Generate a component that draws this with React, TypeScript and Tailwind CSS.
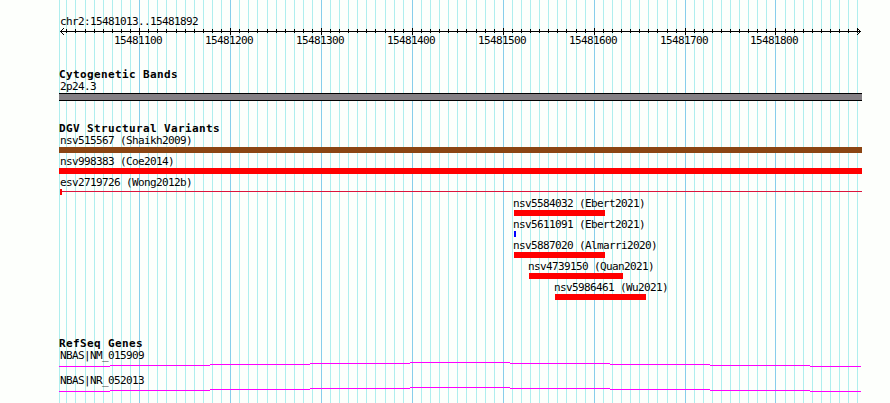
const START = 1013;
const OFFSET = 15480000;

interface Feature {
  name: string;
  x: number;
  width: number;
  color: string;
}

const wideVariants: Feature[] = [
  { name: "nsv515567 (Shaikh2009)", x: 59, width: 803, color: "bg-[#8b4513]" },
  { name: "nsv998383 (Coe2014)", x: 59, width: 803, color: "bg-[#ff0000]" },
];

const variants: Feature[] = [
  { name: "nsv5584032 (Ebert2021)", x: 514, width: 91, color: "bg-[#ff0000]" },
  { name: "nsv5611091 (Ebert2021)", x: 514, width: 2, color: "bg-[#0000ff]" },
  { name: "nsv5887020 (Almarri2020)", x: 514, width: 91, color: "bg-[#ff0000]" },
  { name: "nsv4739150 (Quan2021)", x: 529, width: 94, color: "bg-[#ff0000]" },
  { name: "nsv5986461 (Wu2021)", x: 555, width: 91, color: "bg-[#ff0000]" },
];

// x of every hundredth base, and the minor step that takes the extra pixel
const majors = [
  { x: 48, wide: 4 },
  { x: 139, wide: 4 },
  { x: 230, wide: 4 },
  { x: 321, wide: 7 },
  { x: 412, wide: 7 },
  { x: 503, wide: 8 },
  { x: 594, wide: 8 },
  { x: 685, wide: 99 },
  { x: 775, wide: 1 },
];

const ticks = majors.flatMap(({ x, wide }, m) =>
  Array.from({ length: 10 }, (_, i) => ({
    x: x + i * 9 + (i >= wide ? 1 : 0),
    major: i === 0,
    base: OFFSET + 1000 + m * 100 + i * 10,
  })),
).filter((t) => t.base > OFFSET + START && t.x < 860);

const intron = [
  [59, 110, 4],
  [110, 210, 3],
  [210, 310, 2],
  [310, 410, 1],
  [410, 510, 0],
  [510, 610, 1],
  [610, 710, 2],
  [710, 810, 3],
  [810, 861, 4],
];

function Grid() {
  return (
    <div className="pointer-events-none absolute inset-0" aria-hidden="true">
      <div className="absolute inset-y-0 left-[59px] w-px bg-[#afeeee]" />
      {ticks.map((t) => (
        <div
          key={t.base}
          className={t.major ? "absolute inset-y-0 w-px bg-[#87ceeb]" : "absolute inset-y-0 w-px bg-[#afeeee]"}
          style={{ left: t.x }}
        />
      ))}
    </div>
  );
}

function Ruler() {
  return (
    <svg width="890" height="20" className="block" shapeRendering="crispEdges">
      <rect x="60" y="3" width="801" height="1" />
      <path d="M61 2h1v1h-1z M62 1h1v1h-1z M63 0h1v1h-1z M61 4h1v1h-1z M62 5h1v1h-1z M63 6h1v1h-1z" />
      <path d="M859 2h1v1h-1z M858 1h1v1h-1z M857 0h1v1h-1z M859 4h1v1h-1z M858 5h1v1h-1z M857 6h1v1h-1z" />
      {ticks.map((t) => (
        <rect key={t.base} x={t.x} y={t.major ? 0 : 1} width="1" height={t.major ? 7 : 4} />
      ))}
      {ticks.filter((t) => t.major).map((t) => (
        <text key={t.base} x={t.x - 25} y="16">{t.base}</text>
      ))}
    </svg>
  );
}

function Heading({ children }: { children: string }) {
  return <h2 className="h-3 pl-[59px] font-bold tracking-[0.38px]">{children}</h2>;
}

function VariantRow({ feature }: { feature: Feature }) {
  return (
    <div className="h-[21px]" style={{ paddingLeft: feature.x }}>
      <div className={feature.x === 59 ? "h-3 pl-px" : "-ml-px h-3"}>{feature.name}</div>
      <div className={`h-1.5 ${feature.color}`} style={{ width: feature.width }} />
    </div>
  );
}

function Gene({ name }: { name: string }) {
  return (
    <div className="h-[25px]">
      <div className="h-3 pl-[60px]">{name}</div>
      <svg width="890" height="5" className="block" shapeRendering="crispEdges">
        {intron.map(([from, to, y]) => (
          <rect key={from} x={from} y={y} width={to - from} height="1" fill="#ff00ff" />
        ))}
      </svg>
    </div>
  );
}

export default function App() {
  return (
    <main className="relative h-[403px] w-[890px] overflow-hidden bg-[#fdfffc] font-['DejaVu_Sans_Mono',monospace] text-[11px] leading-3 tracking-[-0.62px] whitespace-pre text-black">
      <Grid />
      <div className="relative flex flex-col pt-4">
        <div className="h-3 pl-[60px]">chr2:15481013..15481892</div>
        <Ruler />

        <section className="mt-[21px]">
          <Heading>Cytogenetic Bands</Heading>
          <div className="h-3 pl-[60px]">2p24.3</div>
          <div className="ml-[59px] h-2 w-[803px] border-y border-black bg-[#848084]" />
        </section>

        <section className="mt-[22px]">
          <Heading>DGV Structural Variants</Heading>
          {wideVariants.map((v) => <VariantRow key={v.name} feature={v} />)}
          <div className="h-[21px]">
            <div className="h-3 pl-[60px]">esv2719726 (Wong2012b)</div>
            <div className="flex items-start pl-[60px]">
              <div className="h-1.5 w-0.5 bg-[#ff0000]" />
              <div className="mt-0.5 h-px w-[800px] bg-[#dc143c]" />
            </div>
          </div>
          {variants.map((v) => <VariantRow key={v.name} feature={v} />)}
        </section>

        <section className="mt-[35px]">
          <Heading>RefSeq Genes</Heading>
          <Gene name="NBAS|NM_015909" />
          <Gene name="NBAS|NR_052013" />
        </section>
      </div>
    </main>
  );
}
